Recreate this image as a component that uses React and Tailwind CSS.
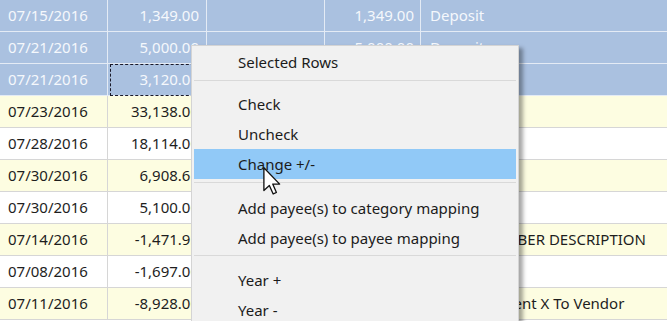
import React from 'react';

const rows = [
  { d: '07/15/2016', a: '1,349.00', c4: '1,349.00', c5: 'Deposit', t: 'sel' },
  { d: '07/21/2016', a: '5,000.00', c4: '5,000.00', c5: 'Deposit', t: 'sel' },
  { d: '07/21/2016', a: '3,120.00', c4: '3,120.00', c5: 'Deposit', t: 'sel', focus: true },
  { d: '07/23/2016', a: '33,138.00', c4: '33,138.00', c5: 'Deposit', t: 'y' },
  { d: '07/28/2016', a: '18,114.00', c4: '18,114.00', c5: 'Deposit', t: 'w' },
  { d: '07/30/2016', a: '6,908.65', c4: '6,908.65', c5: 'Deposit', t: 'y' },
  { d: '07/30/2016', a: '5,100.00', c4: '5,100.00', c5: 'Deposit', t: 'w' },
  { d: '07/14/2016', a: '-1,471.95', c4: '', c5: 'CHECK NUMBER DESCRIPTION', t: 'y' },
  { d: '07/08/2016', a: '-1,697.00', c4: '', c5: 'Check', t: 'w' },
  { d: '07/11/2016', a: '-8,928.00', c4: '', c5: 'Client Payment X To Vendor', t: 'y' },
];

function Row({ r }) {
  const sel = r.t === 'sel';
  const bg = sel ? 'bg-[#aac1e0]' : r.t === 'y' ? 'bg-[#fdfde1]' : 'bg-white';
  const txt = sel ? 'text-[#f5f8fc]' : 'text-[#1e1e1e]';
  const line = sel ? 'border-[#e4ebf5]' : 'border-[#d6d6d6]';
  return (
    <div className={`flex h-8 border-b ${line} ${bg} ${txt}`}>
      <div className={`w-[108px] shrink-0 border-r ${line} flex items-center pl-[8px]`}>{r.d}</div>
      <div className={`relative w-[99px] shrink-0 border-r ${line} flex items-center justify-end pr-[7px]`}>
        {r.a}
        {r.focus && (
          <div className="absolute inset-x-[2px] top-0 bottom-[-1px] border border-dashed border-[#1a1a2a]" />
        )}
      </div>
      <div className={`w-[118px] shrink-0 border-r ${line}`} />
      <div className={`w-[96px] shrink-0 border-r ${line} flex items-center justify-end pr-[6px]`}>{r.c4}</div>
      <div className="flex-1 flex items-center pl-[9px] whitespace-nowrap overflow-hidden">{r.c5}</div>
    </div>
  );
}

function Item({ children, hi }) {
  return (
    <div className={`h-[30px] mx-[2px] flex items-center pl-[44px] ${hi ? 'bg-[#91c9f7]' : ''}`}>
      {children}
    </div>
  );
}

function Sep({ top = 2, bottom = 8 }) {
  return (
    <div style={{ paddingTop: top, paddingBottom: bottom }} className="mx-[2px]">
      <div className="h-px bg-[#d9d9d9]" />
    </div>
  );
}

export default function App() {
  return (
    <div
      className="relative w-[667px] h-[321px] overflow-hidden bg-white text-[15px]"
      style={{ fontFamily: '"Noto Sans", "Open Sans", sans-serif' }}
    >
      <div className="flex flex-col">
        {rows.map((r, i) => (
          <Row key={i} r={r} />
        ))}
      </div>

      <div className="absolute left-[191px] top-[45px] w-[328px] h-[300px] bg-[#f1f1f1] border border-[#d4d4d4] text-[#1b1b1b] shadow-[4px_3px_4px_rgba(0,0,0,0.35)]">
        <div className="h-[33px] flex items-center pl-[46px]">Selected Rows</div>
        <Sep top={1} bottom={8} />
        <Item>Check</Item>
        <Item>Uncheck</Item>
        <Item hi>Change +/-</Item>
        <Sep top={3} bottom={10} />
        <Item>Add payee(s) to category mapping</Item>
        <Item>Add payee(s) to payee mapping</Item>
        <Sep top={2} bottom={9} />
        <Item>Year +</Item>
        <Item>Year -</Item>
      </div>

      <svg
        className="absolute left-[263px] top-[167px]"
        width="18"
        height="28"
        viewBox="0 0 12 19"
      >
        <path
          d="M0.5 0.5 L0.5 16 L4.2 12.6 L6.8 18.3 L9 17.3 L6.5 11.6 L11.2 11.6 Z"
          fill="#ffffff"
          stroke="#111111"
          strokeWidth="0.9"
          strokeLinejoin="round"
        />
      </svg>
    </div>
  );
}
